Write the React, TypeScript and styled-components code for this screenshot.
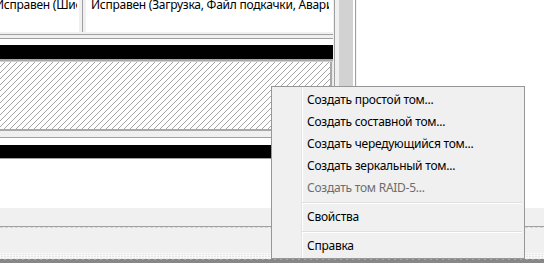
import React from 'react';
import styled, { createGlobalStyle } from 'styled-components';

const Global = createGlobalStyle`
  html, body { margin: 0; padding: 0; }
  body {
    width: 544px; height: 263px; overflow: hidden; background: #ffffff;
    font-family: "Noto Sans", "Open Sans", "DejaVu Sans", sans-serif;
  }
`;

const Screen = styled.div`
  position: relative;
  width: 544px;
  height: 263px;
  overflow: hidden;
  background: #ffffff;
  display: flex;
  flex-direction: column;
`;

const Upper = styled.div`
  display: flex;
  height: 208px;
`;

const LeftPane = styled.div`
  width: 339px;
  display: flex;
`;

const PaneContent = styled.div`
  width: 333px;
  display: flex;
  flex-direction: column;
`;

const PaneEdge = styled.div`
  width: 6px;
  background: linear-gradient(to right, #f0f0f0 0 1px, #a0a0a0 1px 2px, #f0f0f0 2px 6px);
`;

const ListRow = styled.div`
  display: flex;
  height: 32px;
  background: #ffffff;
`;

const Cell = styled.div<{ $w: number; $pl: number; $pr: number }>`
  width: ${p => p.$w}px;
  padding-left: ${p => p.$pl}px;
  padding-right: ${p => p.$pr}px;
  box-sizing: border-box;
  background: #ffffff;
  overflow: hidden;
`;

const CellText = styled.div<{ $shift: number }>`
  margin-left: ${p => p.$shift}px;
  margin-top: -3px;
  font-size: 12px;
  line-height: 16px;
  letter-spacing: -0.25px;
  color: #000000;
  white-space: nowrap;
  overflow: hidden;
`;

const ColDivider = styled.div`
  width: 7px;
  background: linear-gradient(to right, #f0f0f0 0 3px, #a0a0a0 3px 4px, #f0f0f0 4px 7px);
`;

const ListBottom = styled.div`
  height: 2px;
  background: #f0f0f0;
  border-bottom: 1px solid #a0a0a0;
`;

const Splitter = styled.div`
  height: 3px;
  background: #f0f0f0;
`;

const GraphPane = styled.div`
  flex: 1;
  border-top: 1px solid #a0a0a0;
  background: #ffffff;
  padding-top: 6px;
  display: flex;
  flex-direction: column;
`;

const Stripe = styled.div<{ $h: number }>`
  height: ${p => p.$h}px;
  background: #000000;
`;

const StripeSep = styled.div`
  height: 3px;
  background: linear-gradient(to bottom, #a8a8a8 0 2px, #d0d0d0 2px 3px);
`;

const BodyRow = styled.div`
  display: flex;
  height: 67px;
`;

const Hatch = styled.div`
  width: 330px;
  background-color: #ffffff;
  background-image: repeating-linear-gradient(
    135deg,
    #ffffff 0px,
    #ffffff 3.1px,
    #a4a4a4 3.1px,
    #a4a4a4 4.24px
  );
  border-right: 2px solid #a8a8a8;
`;

const BodyEdge = styled.div`
  width: 1px;
  background: #e8e8e8;
`;

const BlockBottom = styled.div`
  height: 2px;
  background: #a8a8a8;
`;

const DiskGap = styled.div`
  height: 14px;
  background: linear-gradient(to bottom, #f0f0f0 0 6px, #a0a0a0 6px 7px, #ffffff 7px 14px);
`;

const StripeLine = styled.div`
  height: 1px;
  background: #a0a0a0;
`;

const ScrollCol = styled.div`
  width: 14px;
  background: #d2d2d2;
`;

const OuterEdge = styled.div`
  width: 4px;
  background: linear-gradient(to right, #ffffff 0 2px, #a0a0a0 2px 3px, #f4f4f4 3px 4px);
`;

const RightArea = styled.div`
  flex: 1;
  background: #ffffff;
`;

const Lower = styled.div`
  height: 55px;
  display: flex;
  flex-direction: column;
  background: #f0f0f0;
`;

const Band = styled.div<{ $h: number }>`
  height: ${p => p.$h}px;
  background: #f0f0f0;
`;

const SolidLine = styled.div`
  height: 1px;
  background: #a0a0a0;
`;

const DashLine = styled.div`
  height: 1px;
  background: repeating-linear-gradient(to right, #d6d6d6 0 3px, #f0f0f0 3px 5px);
`;

const DotBand = styled.div`
  height: 6px;
  background-color: #e6e6e6;
  background-image: linear-gradient(to right, #f8f8f8 1px, transparent 1px),
    linear-gradient(to bottom, #f8f8f8 1px, transparent 1px);
  background-size: 3px 2px;
`;

const DarkBand = styled.div`
  height: 4px;
  background: linear-gradient(to bottom, transparent 0 1px, #878787 1px),
    repeating-linear-gradient(to right, #878787 0 4px, #a8a8a8 4px 6px);
`;

const Menu = styled.div`
  position: absolute;
  left: 271px;
  top: 86px;
  width: 254px;
  height: 173px;
  box-sizing: border-box;
  border: 1px solid #979797;
  padding: 2px 2px 1px 2px;
  background: linear-gradient(
    to right,
    #f0f0f0 0 29px,
    #e2e3e3 29px 30px,
    #ffffff 30px 31px,
    #f0f0f0 31px
  );
  display: flex;
  flex-direction: column;
`;

const Item = styled.div<{ $disabled?: boolean }>`
  height: 22px;
  line-height: 22px;
  padding-left: 33px;
  font-size: 12px;
  letter-spacing: -0.25px;
  color: ${p => (p.$disabled ? '#6d6d6d' : '#000000')};
  white-space: nowrap;
`;

const Separator = styled.div`
  height: 7px;
  margin-left: 28px;
  display: flex;
  flex-direction: column;
  justify-content: center;
  &::after {
    content: '';
    display: block;
    height: 1px;
    background: #e0e0e0;
    border-bottom: 1px solid #ffffff;
  }
`;

export default function App() {
  return (
    <>
      <Global />
      <Screen>
        <Upper>
          <LeftPane>
            <PaneContent>
              <ListRow>
                <Cell $w={79} $pl={0} $pr={2}>
                  <CellText $shift={-5}>Исправен (Шифрованный)</CellText>
                </Cell>
                <ColDivider />
                <Cell $w={247} $pl={5} $pr={4}>
                  <CellText $shift={0}>Исправен (Загрузка, Файл подкачки, Аварийный дамп памяти)</CellText>
                </Cell>
              </ListRow>
              <ListBottom />
              <Splitter />
              <GraphPane>
                <Stripe $h={14} />
                <StripeSep />
                <BodyRow>
                  <Hatch />
                  <BodyEdge />
                </BodyRow>
                <BlockBottom />
                <DiskGap />
                <Stripe $h={13} />
                <StripeLine />
              </GraphPane>
            </PaneContent>
            <PaneEdge />
          </LeftPane>
          <ScrollCol />
          <OuterEdge />
          <RightArea />
        </Upper>
        <Lower>
          <Band $h={18} />
          <SolidLine />
          <DashLine />
          <Band $h={25} />
          <DotBand />
          <DarkBand />
        </Lower>
        <Menu>
          <Item>Создать простой том...</Item>
          <Item>Создать составной том...</Item>
          <Item>Создать чередующийся том...</Item>
          <Item>Создать зеркальный том...</Item>
          <Item $disabled>Создать том RAID-5...</Item>
          <Separator />
          <Item>Свойства</Item>
          <Separator />
          <Item>Справка</Item>
        </Menu>
      </Screen>
    </>
  );
}
